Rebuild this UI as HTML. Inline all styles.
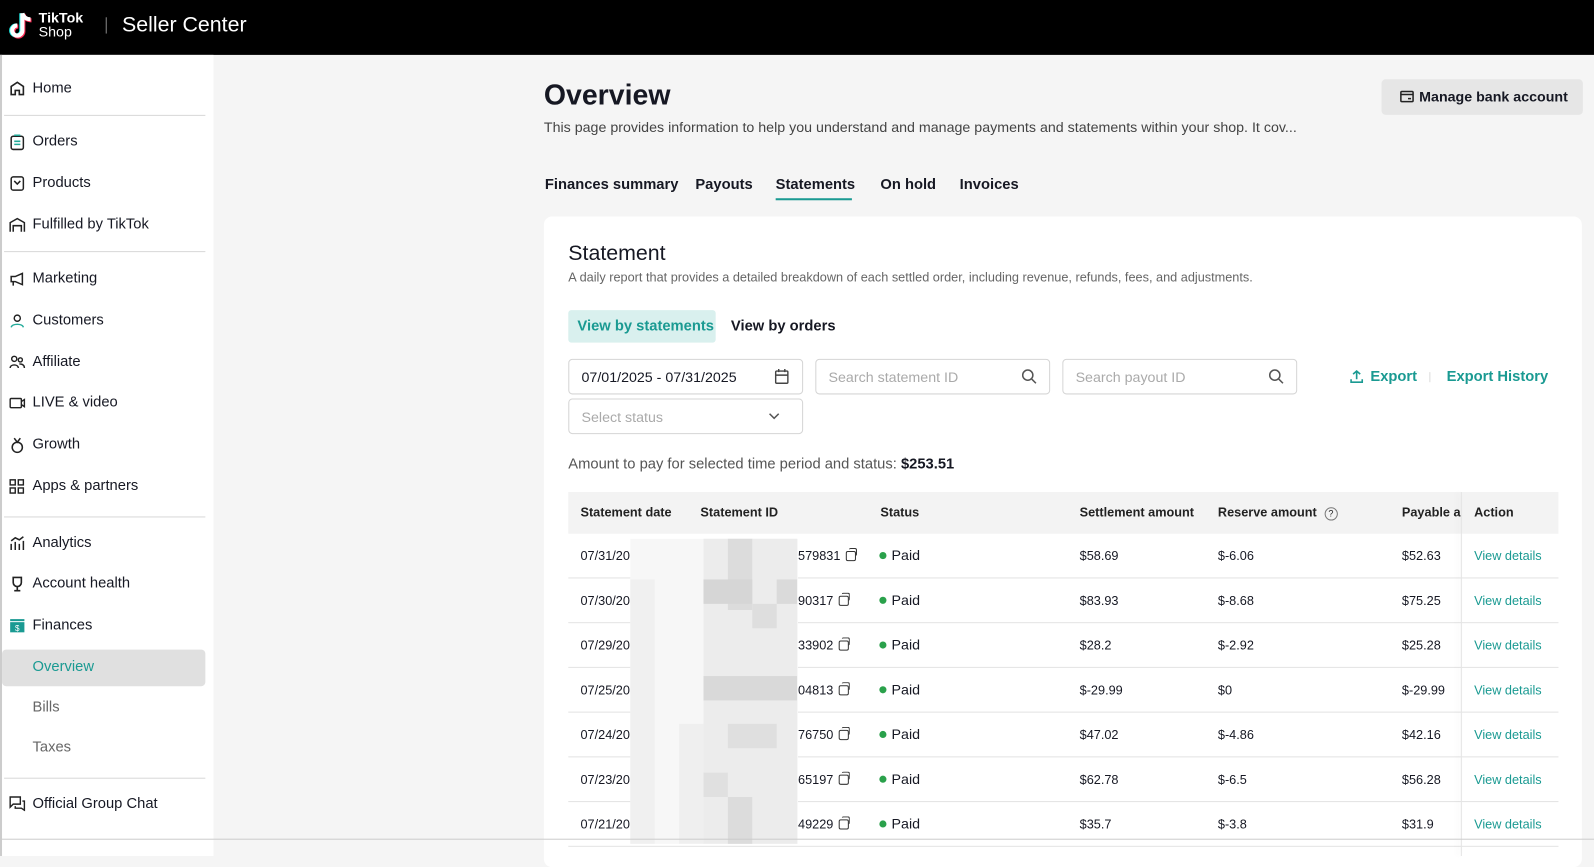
<!DOCTYPE html>
<html><head><meta charset="utf-8"><style>
*{box-sizing:border-box;margin:0;padding:0}
body{width:1594px;height:842px;overflow:hidden;background:#f5f5f5;font-family:"Liberation Sans","Noto Sans CJK SC",sans-serif;color:#161823;position:relative}
#w{position:absolute;left:0;top:0;width:1568px;height:828px;transform:scale(1.0166);transform-origin:0 0}
.a{position:absolute;white-space:nowrap}
.top{position:absolute;left:0;top:0;width:1600px;height:54px;background:#000}
.side{position:absolute;left:0;top:54px;width:210px;height:788px;background:#fff;border-left:2px solid #ccc}
.nav{position:absolute;left:32px;font-size:14.5px;color:#161823}
.div{position:absolute;left:4px;width:198px;height:1px;background:#d8d8d8}
.card{position:absolute;left:535px;top:213px;width:1021px;height:640px;background:#fff;border-radius:8px}
.inp{position:absolute;height:35px;border:1px solid #d5d5d5;border-radius:4px;background:#fff;font-size:14px;white-space:nowrap}
.teal{color:#1a9a92}
.th{position:absolute;top:497px;font-size:12.5px;font-weight:bold;color:#222;white-space:nowrap}
.row{position:absolute;left:559px;width:974px;height:44px;border-bottom:1px solid #e3e3e3;font-size:12.5px}
.row span{position:absolute;top:15px;white-space:nowrap}
.dot{display:inline-block;width:7px;height:7px;border-radius:50%;background:#2aa14b;margin-right:5px;vertical-align:1px}
.paid{font-size:14px!important;top:13px!important}
.cp{display:inline-block;width:10px;height:10px;border:1.5px solid #333;border-radius:2px;margin-left:5px;position:relative;vertical-align:-1px}
.cp:before{content:"";position:absolute;left:2px;top:-4px;width:7px;height:7px;border:1.5px solid #333;border-radius:2px;border-left:none;border-bottom:none}
.blk{position:absolute}
</style></head><body><div id="w">
<div class="top">
 <svg class="a" style="left:8px;top:11px" width="26" height="30" viewBox="0 0 26 30"><path d="M14 2v17a5 5 0 1 1-5-5" fill="none" stroke="#25f4ee" stroke-width="4" transform="translate(-1,0)"/><path d="M14 2v17a5 5 0 1 1-5-5M14 2c1 4 4 6 8 6" fill="none" stroke="#fe2c55" stroke-width="4" transform="translate(1,1)"/><path d="M14 2v17a5 5 0 1 1-5-5M14 2c1 4 4 6 8 6" fill="none" stroke="#fff" stroke-width="4"/></svg>
 <div class="a" style="left:38px;top:10px;color:#fff;font-weight:bold;font-size:14px;line-height:14px">TikTok</div>
 <div class="a" style="left:38px;top:24px;color:#fff;font-size:14px;line-height:15px">Shop</div>
 <div class="a" style="left:104px;top:17px;width:1px;height:16px;background:#888"></div>
 <div class="a" style="left:120px;top:13px;color:#fff;font-size:21px">Seller Center</div>
</div>
<div class="side"></div>
<div class="nav a" style="top:79px">Home</div>
<div class="div" style="top:113px"></div>
<div class="nav a" style="top:131px">Orders</div>
<div class="nav a" style="top:172px">Products</div>
<div class="nav a" style="top:213px">Fulfilled by TikTok</div>
<div class="div" style="top:247px"></div>
<div class="nav a" style="top:266px">Marketing</div>
<div class="nav a" style="top:307px">Customers</div>
<div class="nav a" style="top:348px">Affiliate</div>
<div class="nav a" style="top:388px">LIVE &amp; video</div>
<div class="nav a" style="top:429px">Growth</div>
<div class="nav a" style="top:470px">Apps &amp; partners</div>
<div class="div" style="top:508px"></div>
<div class="nav a" style="top:526px">Analytics</div>
<div class="nav a" style="top:566px">Account health</div>
<div class="nav a" style="top:607px">Finances</div>
<div class="a" style="left:2px;top:639px;width:200px;height:36px;background:#e0e0e0;border-radius:4px"></div>
<div class="nav a teal" style="top:648px">Overview</div>
<div class="nav a" style="top:688px;color:#666">Bills</div>
<div class="nav a" style="top:727px;color:#666">Taxes</div>
<div class="div" style="top:765px"></div>
<div class="nav a" style="top:783px">Official Group Chat</div>
<svg class="a" style="left:9px;top:79px" width="16" height="16" viewBox="0 0 16 16" fill="none" stroke="#222" stroke-width="1.6"><path d="M2 14V6l6-4 6 4v8h-4v-4H6v4z"/></svg>
<svg class="a" style="left:10px;top:132px" width="14" height="16" viewBox="0 0 14 16" fill="none" stroke="#222" stroke-width="1.5"><rect x="1" y="2" width="12" height="13" rx="2"/><path d="M4 1h6M4 7h6M4 10h6" stroke="#2a9"/></svg>
<svg class="a" style="left:10px;top:173px" width="14" height="15" viewBox="0 0 14 15" fill="none" stroke="#222" stroke-width="1.5"><rect x="1" y="1" width="12" height="13" rx="2"/><path d="M4 5l3 3 3-3"/></svg>
<svg class="a" style="left:9px;top:214px" width="16" height="15" viewBox="0 0 16 15" fill="none" stroke="#222" stroke-width="1.5"><path d="M1 14V5l7-4 7 4v9M4 14V8h8v6"/></svg>
<svg class="a" style="left:9px;top:267px" width="16" height="15" viewBox="0 0 16 15" fill="none" stroke="#222" stroke-width="1.5"><path d="M2 5h4l7-3v11l-7-3H2zM4 10v4" /></svg>
<svg class="a" style="left:9px;top:308px" width="16" height="15" viewBox="0 0 16 15" fill="none" stroke="#222" stroke-width="1.4"><circle cx="8" cy="5" r="3"/><path d="M2 14c1-4 11-4 12 0" stroke="#2a9"/></svg>
<svg class="a" style="left:9px;top:349px" width="16" height="15" viewBox="0 0 16 15" fill="none" stroke="#222" stroke-width="1.4"><circle cx="5" cy="4" r="2.5"/><circle cx="11" cy="5" r="2"/><path d="M1 13c0-4 8-4 8 0M10 9c3 0 5 1 5 4"/></svg>
<svg class="a" style="left:9px;top:389px" width="16" height="15" viewBox="0 0 16 15" fill="none" stroke="#222" stroke-width="1.4"><rect x="1" y="3" width="11" height="9" rx="1"/><path d="M12 6l3-2v7l-3-2"/></svg>
<svg class="a" style="left:10px;top:430px" width="14" height="16" viewBox="0 0 14 16" fill="none" stroke="#222" stroke-width="1.5"><circle cx="7" cy="10" r="5"/><path d="M4 1l3 4 3-4"/></svg>
<svg class="a" style="left:9px;top:471px" width="15" height="15" viewBox="0 0 15 15" fill="none" stroke="#222" stroke-width="1.4"><rect x="1" y="1" width="5" height="5"/><rect x="9" y="1" width="5" height="5"/><rect x="1" y="9" width="5" height="5"/><rect x="9" y="9" width="5" height="5"/></svg>
<svg class="a" style="left:9px;top:527px" width="16" height="15" viewBox="0 0 16 15" fill="none" stroke="#222" stroke-width="1.5"><path d="M2 14V8M6 14V6M10 14V8M14 14V5M2 5l4-3 4 2 4-3" /></svg>
<svg class="a" style="left:10px;top:567px" width="14" height="15" viewBox="0 0 14 15" fill="none" stroke="#222" stroke-width="1.6"><path d="M3 1h8v5a4 4 0 0 1-8 0zM7 10v4M4 14h6"/></svg>
<svg class="a" style="left:9px;top:608px" width="16" height="15" viewBox="0 0 16 15"><rect x="1" y="1" width="14" height="2" fill="#1a9a92"/><rect x="1" y="4" width="14" height="10" fill="#1a9a92"/><text x="8" y="12.5" font-size="8" fill="#fff" text-anchor="middle" font-family="Liberation Sans">$</text></svg>
<svg class="a" style="left:9px;top:783px" width="16" height="15" viewBox="0 0 16 15" fill="none" stroke="#222" stroke-width="1.4"><path d="M1 1h10v7H4l-3 3zM13 5h2v9l-3-2H6v-2"/></svg>

<div class="a" style="left:535px;top:78px;font-size:28px;font-weight:bold">Overview</div>
<div class="a" style="left:535px;top:117px;font-size:14px;color:#444">This page provides information to help you understand and manage payments and statements within your shop. It cov...</div>
<div class="a" style="left:1359px;top:78px;width:198px;height:35px;background:#e6e6e6;border-radius:4px;font-size:14px;font-weight:bold;padding:9px 0 0 37px">Manage bank account</div>
<svg class="a" style="left:1377px;top:89px" width="14" height="12" viewBox="0 0 14 12" fill="none" stroke="#222" stroke-width="1.5"><rect x="1" y="1" width="12" height="10" rx="1"/><path d="M1 4h12M8 8h3"/></svg>
<div class="a" style="left:536px;top:174px;font-size:14.5px;font-weight:bold">Finances summary</div>
<div class="a" style="left:684px;top:174px;font-size:14.5px;font-weight:bold">Payouts</div>
<div class="a" style="left:763px;top:174px;font-size:14.5px;font-weight:bold">Statements</div>
<div class="a" style="left:763px;top:195px;width:75px;height:2px;background:#1a9a92"></div>
<div class="a" style="left:866px;top:174px;font-size:14.5px;font-weight:bold">On hold</div>
<div class="a" style="left:944px;top:174px;font-size:14.5px;font-weight:bold">Invoices</div>

<div class="card"></div>
<div class="a" style="left:559px;top:238px;font-size:21px">Statement</div>
<div class="a" style="left:559px;top:266px;font-size:12.5px;color:#666">A daily report that provides a detailed breakdown of each settled order, including revenue, refunds, fees, and adjustments.</div>
<div class="a teal" style="left:559px;top:305px;width:145px;height:32px;background:#d9f0ee;border-radius:3px;font-size:14.5px;font-weight:bold;padding:8px 0 0 9px">View by statements</div>
<div class="a" style="left:719px;top:313px;font-size:14.5px;font-weight:bold">View by orders</div>
<div class="inp" style="left:559px;top:353px;width:231px;padding:9px 12px">07/01/2025 - 07/31/2025</div>
<svg class="a" style="left:762px;top:363px" width="14" height="15" viewBox="0 0 14 15" fill="none" stroke="#444" stroke-width="1.4"><rect x="1" y="2" width="12" height="12" rx="1"/><path d="M1 6h12M4 0v3M10 0v3"/></svg>
<div class="inp" style="left:802px;top:353px;width:231px;padding:9px 12px;color:#aaa">Search statement ID</div>
<div class="inp" style="left:1045px;top:353px;width:231px;padding:9px 12px;color:#aaa">Search payout ID</div>
<svg class="a" style="left:1005px;top:363px" width="15" height="15" viewBox="0 0 15 15" fill="none" stroke="#555" stroke-width="1.5"><circle cx="6" cy="6" r="5"/><path d="M10 10l4 4"/></svg>
<svg class="a" style="left:1248px;top:363px" width="15" height="15" viewBox="0 0 15 15" fill="none" stroke="#555" stroke-width="1.5"><circle cx="6" cy="6" r="5"/><path d="M10 10l4 4"/></svg>
<div class="inp" style="left:559px;top:392px;width:231px;padding:9px 12px;color:#aaa">Select status</div>
<svg class="a" style="left:756px;top:406px" width="11" height="7" viewBox="0 0 11 7" fill="none" stroke="#555" stroke-width="1.5"><path d="M1 1l4.5 4.5L10 1"/></svg>
<svg class="a" style="left:1328px;top:364px" width="13" height="13" viewBox="0 0 13 13" fill="none" stroke="#1a9a92" stroke-width="1.6"><path d="M6.5 9V1M3 4l3.5-3L10 4M1 9v3h11V9"/></svg>
<div class="a teal" style="left:1348px;top:363px;font-size:14.5px;font-weight:bold">Export</div>
<div class="a" style="left:1406px;top:366px;width:1px;height:10px;background:#ddd"></div>
<div class="a teal" style="left:1423px;top:363px;font-size:14.5px;font-weight:bold">Export History</div>
<div class="a" style="left:559px;top:449px;font-size:14.5px;color:#555">Amount to pay for selected time period and status: <b style="color:#161823">$253.51</b></div>

<div class="a" style="left:559px;top:484px;width:974px;height:41px;background:#f3f3f3"></div>
<div class="th" style="left:571px">Statement date</div>
<div class="th" style="left:689px">Statement ID</div>
<div class="th" style="left:866px">Status</div>
<div class="th" style="left:1062px">Settlement amount</div>
<div class="th" style="left:1198px">Reserve amount <span style="display:inline-block;width:13px;height:13px;border:1px solid #777;border-radius:50%;font-size:9px;text-align:center;line-height:11px;font-weight:normal;margin-left:4px">?</span></div>
<div class="th" style="left:1379px;width:58px;overflow:hidden">Payable amount</div>
<div class="th" style="left:1450px">Action</div>

<div class="row" style="top:525px"><span style="left:12px">07/31/20</span><span style="left:226px">579831<i class="cp"></i></span><span class="paid" style="left:306px"><i class="dot"></i>Paid</span><span style="left:503px">$58.69</span><span style="left:639px">$-6.06</span><span style="left:820px">$52.63</span><span class="teal" style="left:891px">View details</span></div>
<div class="row" style="top:569px"><span style="left:12px">07/30/20</span><span style="left:226px">90317<i class="cp"></i></span><span class="paid" style="left:306px"><i class="dot"></i>Paid</span><span style="left:503px">$83.93</span><span style="left:639px">$-8.68</span><span style="left:820px">$75.25</span><span class="teal" style="left:891px">View details</span></div>
<div class="row" style="top:613px"><span style="left:12px">07/29/20</span><span style="left:226px">33902<i class="cp"></i></span><span class="paid" style="left:306px"><i class="dot"></i>Paid</span><span style="left:503px">$28.2</span><span style="left:639px">$-2.92</span><span style="left:820px">$25.28</span><span class="teal" style="left:891px">View details</span></div>
<div class="row" style="top:657px"><span style="left:12px">07/25/20</span><span style="left:226px">04813<i class="cp"></i></span><span class="paid" style="left:306px"><i class="dot"></i>Paid</span><span style="left:503px">$-29.99</span><span style="left:639px">$0</span><span style="left:820px">$-29.99</span><span class="teal" style="left:891px">View details</span></div>
<div class="row" style="top:701px"><span style="left:12px">07/24/20</span><span style="left:226px">76750<i class="cp"></i></span><span class="paid" style="left:306px"><i class="dot"></i>Paid</span><span style="left:503px">$47.02</span><span style="left:639px">$-4.86</span><span style="left:820px">$42.16</span><span class="teal" style="left:891px">View details</span></div>
<div class="row" style="top:745px"><span style="left:12px">07/23/20</span><span style="left:226px">65197<i class="cp"></i></span><span class="paid" style="left:306px"><i class="dot"></i>Paid</span><span style="left:503px">$62.78</span><span style="left:639px">$-6.5</span><span style="left:820px">$56.28</span><span class="teal" style="left:891px">View details</span></div>
<div class="row" style="top:789px"><span style="left:12px">07/21/20</span><span style="left:226px">49229<i class="cp"></i></span><span class="paid" style="left:306px"><i class="dot"></i>Paid</span><span style="left:503px">$35.7</span><span style="left:639px">$-3.8</span><span style="left:820px">$31.9</span><span class="teal" style="left:891px">View details</span></div>
<div class="a" style="left:1437px;top:484px;width:1px;height:358px;background:#e5e5e5;box-shadow:-3px 0 5px rgba(0,0,0,.08)"></div>

<div class="blk" style="left:620px;top:530px;width:165px;height:300px;background:#f7f7f7"></div>
<div class="blk" style="left:692px;top:530px;width:92px;height:300px;background:#ececec"></div>
<div class="blk" style="left:716px;top:530px;width:24px;height:70px;background:#dcdcdc"></div>
<div class="blk" style="left:692px;top:570px;width:48px;height:24px;background:#d6d6d6"></div>
<div class="blk" style="left:764px;top:570px;width:20px;height:24px;background:#dadada"></div>
<div class="blk" style="left:740px;top:594px;width:24px;height:24px;background:#dedede"></div>
<div class="blk" style="left:692px;top:665px;width:92px;height:24px;background:#d9d9d9"></div>
<div class="blk" style="left:716px;top:712px;width:48px;height:24px;background:#dfdfdf"></div>
<div class="blk" style="left:692px;top:760px;width:24px;height:24px;background:#e0e0e0"></div>
<div class="blk" style="left:716px;top:784px;width:24px;height:46px;background:#dcdcdc"></div>
<div class="blk" style="left:620px;top:570px;width:24px;height:260px;background:#f0f0f0"></div>
<div class="blk" style="left:668px;top:712px;width:24px;height:118px;background:#efefef"></div>
<div class="a" style="left:0;top:825px;width:1600px;height:1px;background:#ccc"></div>
</div></body></html>
